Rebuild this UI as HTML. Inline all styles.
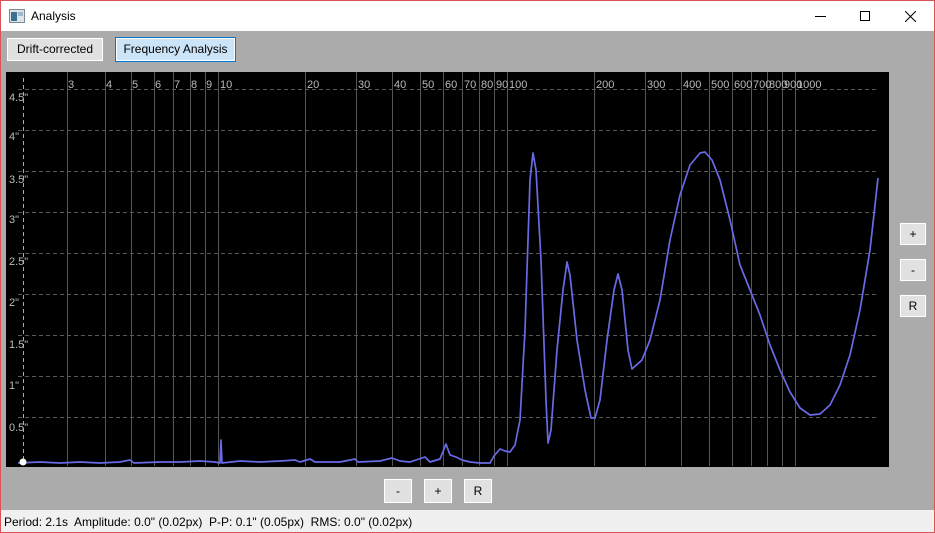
<!DOCTYPE html>
<html><head><meta charset="utf-8"><style>
*{margin:0;padding:0;box-sizing:border-box}
body{width:935px;height:533px;overflow:hidden;font-family:"Liberation Sans",sans-serif;font-size:12px;background:#ababab;position:relative}
.win{position:absolute;inset:0;border:1px solid #d9535b;border-top:none}
.title{position:absolute;left:0;top:0;width:935px;height:31px;background:#fff;border-top:1px solid #d9535b}
.btn{position:absolute;background:#e1e1e1;border:1px solid #adadad;outline:1px solid #fff;outline-offset:-2px;font-size:12px;text-align:center;color:#000}
.status{position:absolute;left:1px;right:1px;bottom:1px;height:22px;background:#f0f0f0;font-size:12px;padding:5px 3px;color:#000}
</style></head><body>
<div class="title">
<svg style="position:absolute;left:9px;top:8px" width="16" height="14"><rect x="0.5" y="0.5" width="15" height="13" fill="#dde4ea" stroke="#7a8a96"/><rect x="2" y="3" width="6" height="9" fill="#3f6f8f"/><rect x="9" y="3" width="5" height="4" fill="#9fb7c8"/></svg>
<div style="position:absolute;left:31px;top:8px;font-size:12px">Analysis</div>
<div style="position:absolute;left:815px;top:15px;width:11px;height:1px;background:#000"></div>
<div style="position:absolute;left:860px;top:10px;width:10px;height:10px;border:1px solid #000"></div>
<svg style="position:absolute;left:905px;top:10px" width="11" height="11"><path d="M0 0L11 11M11 0L0 11" stroke="#000" stroke-width="1"/></svg>
</div>
<div class="win"></div>
<div class="btn" style="left:6px;top:37px;width:98px;height:25px;line-height:22px">Drift-corrected</div>
<div class="btn" style="left:115px;top:37px;width:121px;height:25px;line-height:22px;background:#cce4f7;border-color:#0078d7">Frequency Analysis</div>
<svg style="position:absolute;left:6px;top:72px" width="883" height="395" viewBox="6 72 883 395">
<rect x="6" y="72" width="883" height="395" fill="#000"/>
<g stroke="#555" stroke-width="1">
<path d="M67.5 72V466M105.5 72V466M131.5 72V466M154.5 72V466M173.5 72V466M190.5 72V466M205.5 72V466M218.5 72V466M305.5 72V466M356.5 72V466M392.5 72V466M420.5 72V466M443.5 72V466M462.5 72V466M479.5 72V466M494.5 72V466M507.5 72V466M594.5 72V466M645.5 72V466M681.5 72V466M709.5 72V466M732.5 72V466M751.5 72V466M767.5 72V466M782.5 72V466M795.5 72V466"/>
</g>
<g stroke="#585858" stroke-width="1" stroke-dasharray="4,3">
<path d="M18 89.5H879M18 130.5H879M18 171.5H879M18 212.5H879M18 253.5H879M18 294.5H879M18 335.5H879M18 376.5H879M18 417.5H879"/>
<path d="M23.5 78V462" stroke="#aaa"/>
</g>
<g fill="#bbb" font-size="11" font-family="Liberation Sans,sans-serif">
<text x="68" y="88">3</text><text x="106" y="88">4</text><text x="132" y="88">5</text><text x="155" y="88">6</text><text x="174" y="88">7</text><text x="191" y="88">8</text><text x="206" y="88">9</text><text x="220" y="88">10</text><text x="307" y="88">20</text><text x="358" y="88">30</text><text x="394" y="88">40</text><text x="422" y="88">50</text><text x="445" y="88">60</text><text x="464" y="88">70</text><text x="481" y="88">80</text><text x="496" y="88">90</text><text x="509" y="88">100</text><text x="596" y="88">200</text><text x="647" y="88">300</text><text x="683" y="88">400</text><text x="711" y="88">500</text><text x="734" y="88">600</text><text x="753" y="88">700</text><text x="769" y="88">800</text><text x="784" y="88">900</text><text x="797" y="88">1000</text>
<text x="9" y="101">4.5"</text><text x="9" y="140">4"</text><text x="9" y="183">3.5"</text><text x="9" y="223">3"</text><text x="9" y="265">2.5"</text><text x="9" y="306">2"</text><text x="9" y="348">1.5"</text><text x="9" y="389">1"</text><text x="9" y="431">0.5"</text>
</g>
<polyline fill="none" stroke="#6a6ae6" stroke-width="1.7" stroke-linejoin="round" points="18,463 40,462 60,463 80,462 100,463 120,462 130,460 134,463 160,462 180,462 200,461 215,462 220,463 221,440 222,463 240,461 260,462 280,461 295,460 300,462 310,459 315,462 340,462 355,459 358,462 380,461 392,458 400,461 410,462 425,457 430,462 440,459 446,444 450,455 456,457 462,460 470,462 480,463 490,463 494,456 500,449 505,451 510,452 515,445 520,420 525,330 530,180 533,153 536,170 541,260 546,400 548,443 551,430 557,350 563,290 567,262 570,275 577,340 585,390 591,418 595,418 600,400 607,340 614,290 618,274 622,290 628,350 632,369 642,360 650,340 660,300 670,240 680,195 690,165 700,153 705,152 712,160 720,180 730,220 740,265 750,290 760,315 770,345 780,370 790,392 800,408 810,415 820,414 830,405 840,385 850,355 860,310 870,250 878,178"/>
<circle cx="23" cy="462" r="3.5" fill="#fff"/>
</svg>
<div class="btn" style="left:899px;top:222px;width:28px;height:24px;line-height:22px">+</div>
<div class="btn" style="left:899px;top:258px;width:28px;height:24px;line-height:22px">-</div>
<div class="btn" style="left:899px;top:294px;width:28px;height:24px;line-height:22px">R</div>
<div class="btn" style="left:383px;top:478px;width:30px;height:26px;line-height:24px">-</div>
<div class="btn" style="left:423px;top:478px;width:30px;height:26px;line-height:24px">+</div>
<div class="btn" style="left:463px;top:478px;width:30px;height:26px;line-height:24px">R</div>
<div class="status">Period: 2.1s&nbsp; Amplitude: 0.0" (0.02px)&nbsp; P-P: 0.1" (0.05px)&nbsp; RMS: 0.0" (0.02px)</div>
</body></html>
